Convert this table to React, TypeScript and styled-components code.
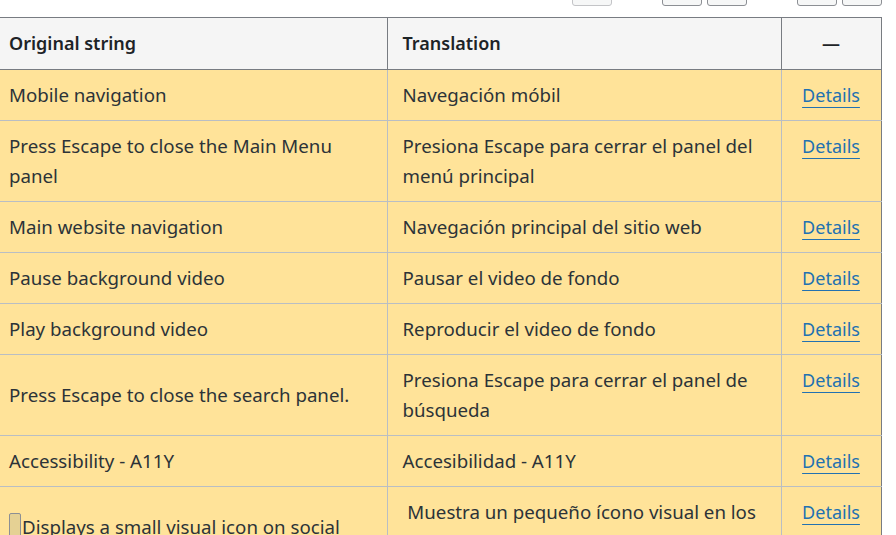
import React from "react";
import styled, { createGlobalStyle } from "styled-components";

const Global = createGlobalStyle`
  html, body { margin: 0; padding: 0; background: #ffffff; }
  body {
    font-family: "Noto Sans", "Open Sans", sans-serif;
    color: #2c3338;
    overflow: hidden;
  }
`;

const Page = styled.div`
  width: 896px;
  height: 535px;
  overflow: hidden;
`;

const Pager = styled.div`
  height: 17px;
  width: 882px;
  display: flex;
  justify-content: flex-end;
  align-items: flex-end;
  overflow: hidden;
`;

const PagerGroup = styled.div`
  display: flex;
  gap: 5px;
  margin-left: 50px;
  margin-bottom: 11px;
`;

const PageButton = styled.span<{ $disabled?: boolean }>`
  display: block;
  width: 40px;
  height: 30px;
  box-sizing: border-box;
  border: 1px solid ${(p) => (p.$disabled ? "#c3c4c7" : "#8c8f94")};
  border-radius: 3px;
  background: #f6f7f7;
`;

const Table = styled.table`
  width: 881px;
  border-collapse: collapse;
  table-layout: fixed;
  font-size: 18.7px;
  line-height: 30px;
`;

const HeadCell = styled.th<{ $w: number; $center?: boolean }>`
  width: ${(p) => p.$w}px;
  box-sizing: border-box;
  background: #f5f5f5;
  border-top: 1px solid #787c82;
  border-bottom: 1px solid #787c82;
  border-right: 1px solid #787c82;
  padding: 10px 15px 11px;
  text-align: ${(p) => (p.$center ? "center" : "left")};
  font-size: 18px;
  font-weight: 600;
  color: #1d2327;
  &:first-child {
    padding-left: 9px;
  }
`;

const Row = styled.tr`
  background: #ffe399;
`;

const Cell = styled.td<{ $top?: boolean; $center?: boolean; $pre?: boolean }>`
  border-bottom: 1px solid #b9bec4;
  border-right: 1px solid #b9bec4;
  padding: 10px 15px;
  vertical-align: ${(p) => (p.$top ? "top" : "middle")};
  text-align: ${(p) => (p.$center ? "center" : "left")};
  white-space: ${(p) => (p.$pre ? "pre-wrap" : "normal")};
  &:first-child {
    padding-left: 9px;
  }
  &:last-child {
    border-right-color: #787c82;
    padding: 10px 8px;
  }
`;

const DetailsLink = styled.a`
  color: #2271b1;
  font-size: 18px;
  text-decoration: underline;
  text-underline-offset: 5px;
  text-decoration-thickness: 1px;
  cursor: pointer;
`;

const VisualIcon = styled.span`
  display: inline-block;
  width: 12px;
  height: 26px;
  box-sizing: border-box;
  border: 1px solid #8c8f94;
  border-radius: 2px;
  background: #e5d194;
  vertical-align: -5px;
  margin-right: 1px;
`;

type Entry = { original: React.ReactNode; translation: string };

const entries: Entry[] = [
  { original: "Mobile navigation", translation: "Navegación móbil" },
  {
    original: "Press Escape to close the Main Menu panel",
    translation: "Presiona Escape para cerrar el panel del menú principal",
  },
  { original: "Main website navigation", translation: "Navegación principal del sitio web" },
  { original: "Pause background video", translation: "Pausar el video de fondo" },
  { original: "Play background video", translation: "Reproducir el video de fondo" },
  {
    original: "Press Escape to close the search panel.",
    translation: "Presiona Escape para cerrar el panel de búsqueda",
  },
  { original: "Accessibility - A11Y", translation: "Accesibilidad - A11Y" },
  {
    original: (
      <>
        <VisualIcon />
        Displays a small visual icon on social media links
      </>
    ),
    translation:
      " Muestra un pequeño ícono visual en los enlaces de redes sociales para indicar que se abren en una nueva ventana",
  },
];

export default function App() {
  return (
    <Page>
      <Global />
      <Pager>
        <PagerGroup>
          <PageButton $disabled />
        </PagerGroup>
        <PagerGroup>
          <PageButton />
          <PageButton />
        </PagerGroup>
        <PagerGroup>
          <PageButton />
          <PageButton />
        </PagerGroup>
      </Pager>
      <Table>
        <thead>
          <tr>
            <HeadCell $w={387}>Original string</HeadCell>
            <HeadCell $w={394}>Translation</HeadCell>
            <HeadCell $w={100} $center>
              —
            </HeadCell>
          </tr>
        </thead>
        <tbody>
          {entries.map((e, i) => (
            <Row key={i}>
              <Cell>{e.original}</Cell>
              <Cell $pre={i === 7}>{e.translation}</Cell>
              <Cell $top $center>
                <DetailsLink>Details</DetailsLink>
              </Cell>
            </Row>
          ))}
        </tbody>
      </Table>
    </Page>
  );
}
